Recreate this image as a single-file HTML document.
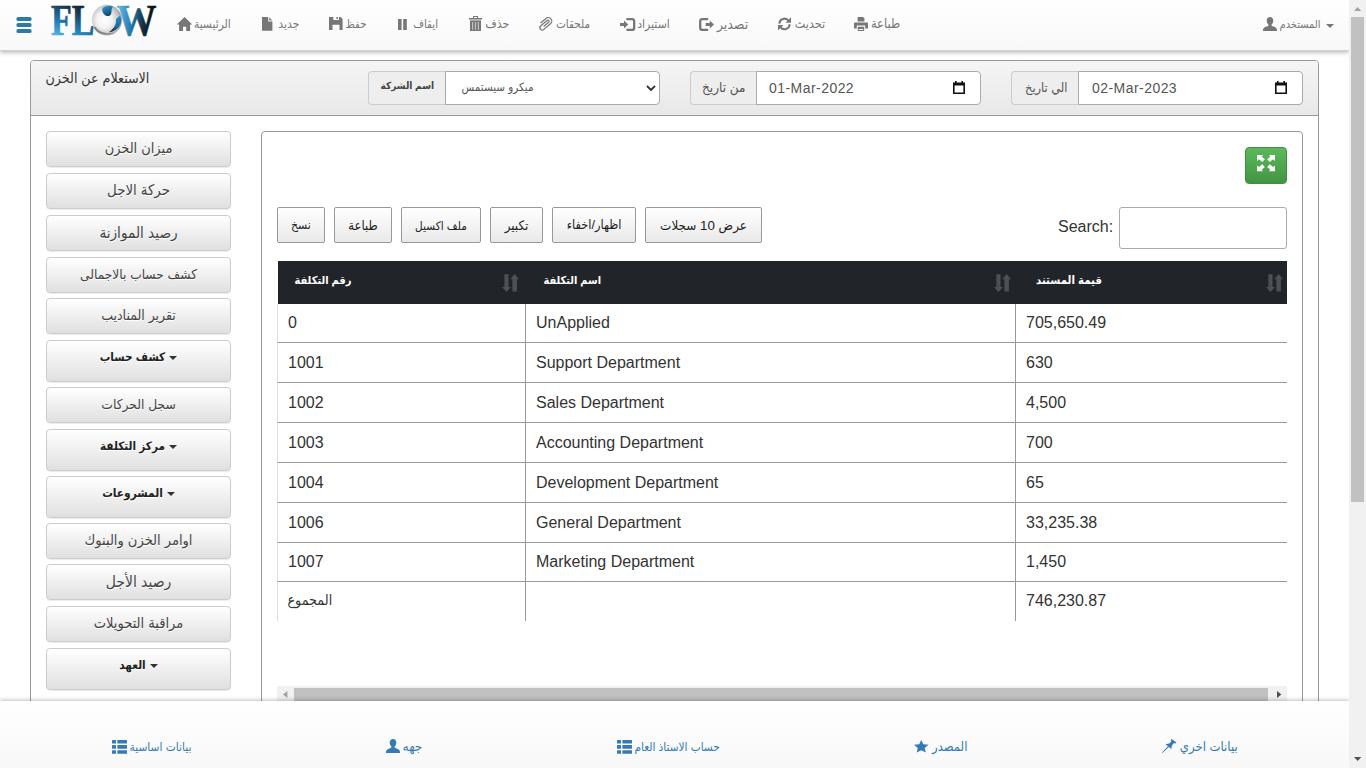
<!DOCTYPE html>
<html lang="ar">
<head>
<meta charset="utf-8">
<title>FLOW</title>
<style>
*{box-sizing:border-box}
html,body{margin:0;padding:0;width:1366px;height:768px;overflow:hidden;background:#fff}
body{font-family:"Liberation Sans","DejaVu Sans Condensed","DejaVu Sans",sans-serif;font-size:14px;color:#333;position:relative}
svg{display:block;overflow:visible}
.abs{position:absolute}
.t{position:absolute;white-space:nowrap;direction:rtl}
#nav{position:absolute;left:0;top:0;width:1349px;height:51px;background:linear-gradient(#fff,#f8f8f8);border-bottom:1px solid #d2d2d2;box-shadow:0 1px 5px rgba(0,0,0,.35);z-index:5}
#nav .t{color:#777;font-size:11px;line-height:16px;top:16px}
#vscroll{position:absolute;left:1349px;top:0;width:17px;height:768px;background:#f1f1f1;z-index:10}
#vscroll .thumb{position:absolute;left:2px;top:17px;width:13px;height:485px;background:#c1c1c1}
#panel{position:absolute;left:30px;top:60px;width:1289px;height:720px;border:1px solid #999;border-radius:4px;background:#fff}
#phead{position:absolute;left:0;top:0;width:1287px;height:55px;background:linear-gradient(#f5f5f5,#e8e8e8);border-bottom:1px solid #999;border-radius:3px 3px 0 0}
.addon{position:absolute;top:71px;height:34px;background:#eee;border:1px solid #ccc;border-right:0;border-radius:4px 0 0 4px}
.ctl{position:absolute;top:71px;height:34px;background:#fff;border:1px solid #aaa;border-radius:0 4px 4px 0}
.sbtn{position:absolute;left:46px;width:185px;border:1px solid #ccc;border-radius:4px;background:linear-gradient(#fff,#e0e0e0);box-shadow:0 1px 1px rgba(0,0,0,.075);text-align:center;font-size:13px;color:#444;text-shadow:0 1px 0 #fff;white-space:nowrap}
.sbtn.n{height:36px;line-height:33px}
.sbtn.d{height:42px;line-height:32px;font-weight:bold;color:#222;font-size:12px;font-family:"Liberation Sans","DejaVu Sans Condensed","DejaVu Sans",sans-serif}
.caret{display:inline-block;width:0;height:0;border-left:4px solid transparent;border-right:4px solid transparent;border-top:4px solid #333;vertical-align:middle;margin:0 0 0 4px;float:none}
#inner{position:absolute;left:261px;top:131px;width:1042px;height:640px;border:1px solid #999;border-radius:4px;background:#fff}
#gbtn{position:absolute;left:1245px;top:147px;width:42px;height:37px;border:1px solid #3e8f3e;border-radius:4px;background:linear-gradient(#5cb85c,#419641)}
.dtb{position:absolute;top:207px;height:36px;border:1px solid #999;border-radius:2px;background:linear-gradient(#fff,#e9e9e9);font-size:11px;color:#222;text-align:center;line-height:35px;white-space:nowrap;direction:rtl}
#search{position:absolute;left:1119px;top:207px;width:168px;height:42px;border:1px solid #aaa;border-radius:3px;background:#fff}
#searchl{position:absolute;left:1058px;top:217px;font-size:16px;color:#333;line-height:20px}
#thead{position:absolute;left:278px;top:261px;width:1009px;height:43px;background:#212529}
#thead .t{font-family:"Liberation Sans","DejaVu Sans Condensed","DejaVu Sans",sans-serif;color:#fff;font-weight:bold;font-size:12px;line-height:20px;top:9px}
.row{position:absolute;left:277px;width:1010px;border-bottom:1px solid #999;border-left:1px solid #ddd;font-size:16px;color:#333}
.row .c{position:absolute;top:0;bottom:0;display:flex;align-items:center;white-space:nowrap}
.vline{position:absolute;width:1px;background:#999;top:304px;height:317px}
#hscroll{position:absolute;left:277px;top:686px;width:1010px;height:17px;background:#f1f1f1}
#hscroll .thumb{position:absolute;left:17px;top:2px;width:974px;height:13px;background:#c1c1c1}
#footer{position:absolute;left:0;top:701px;width:1349px;height:67px;background:linear-gradient(#fff,#f8f8f8);box-shadow:0 -1px 4px rgba(0,0,0,.25);z-index:6}
#footer .t{color:#337ab7;font-size:11px;line-height:16px;top:37.5px}
</style>
</head>
<body>

<div id="nav">
<svg class="abs" style="left:16px;top:17px" width="16" height="16" viewBox="0 0 16 16"><g fill="#2b7ba7"><rect x="0.5" y="0" width="15" height="4" rx="1.5"/><rect x="0.5" y="6" width="15" height="4" rx="1.5"/><rect x="0.5" y="12" width="15" height="4" rx="1.5"/></g></svg>
<svg class="abs" style="left:50px;top:0px" width="110" height="40" viewBox="0 0 110 40">
<defs>
<linearGradient id="lg1" x1="0.7" y1="0" x2="0.3" y2="1"><stop offset="0" stop-color="#0e131b"/><stop offset="0.3" stop-color="#15354d"/><stop offset="0.65" stop-color="#2580b6"/><stop offset="1" stop-color="#6ec6f2"/></linearGradient>
<linearGradient id="lg2" x1="0" y1="0" x2="1" y2="0.12"><stop offset="0" stop-color="#74c4ec"/><stop offset="0.4" stop-color="#2a80b2"/><stop offset="0.72" stop-color="#17303f"/><stop offset="1" stop-color="#070708"/></linearGradient>
<radialGradient id="rg1" cx="0.42" cy="0.5" r="0.62"><stop offset="0" stop-color="#ffffff"/><stop offset="0.42" stop-color="#f2f2f2"/><stop offset="0.72" stop-color="#cbcbcb"/><stop offset="1" stop-color="#909090"/></radialGradient>
<linearGradient id="lg3" x1="0.2" y1="0" x2="0.6" y2="1"><stop offset="0" stop-color="#2f93cc"/><stop offset="1" stop-color="#0f4468"/></linearGradient>
<linearGradient id="lg4" x1="0.5" y1="0" x2="0.3" y2="1"><stop offset="0" stop-color="#2b8ac2"/><stop offset="0.6" stop-color="#1b6a9c"/><stop offset="1" stop-color="#0b1e30"/></linearGradient>
</defs>
<text x="1" y="34.8" font-family="Liberation Serif, serif" font-weight="bold" font-size="44" fill="url(#lg1)" stroke="url(#lg1)" stroke-width="0.7" textLength="43.5" lengthAdjust="spacingAndGlyphs">FL</text>
<ellipse cx="56.9" cy="20.2" rx="15" ry="15.4" fill="url(#rg1)"/>
<path d="M43.2 26.5 C46 33.5 55 37.5 65 32.5 C58 34.5 49 32.5 45.8 27 Z" fill="#858585"/>
<path d="M52.3 10.5 C51.5 6.8 57 5.2 63.2 6.6 C60.6 8.4 62.3 12 60.8 14.6 C58.6 17.8 53 15.6 52.3 10.5 Z" fill="url(#lg3)"/>
<path d="M70.2 15.5 C73.5 22 70 30 58.5 32.6 C63.5 28.8 66.6 25 66 19.2 C67.4 17.6 69 16.4 70.2 15.5 Z" fill="url(#lg4)"/>
<text x="66.5" y="34.8" font-family="Liberation Serif, serif" font-weight="bold" font-size="44" fill="url(#lg2)" stroke="url(#lg2)" stroke-width="0.5" textLength="40" lengthAdjust="spacingAndGlyphs">W</text>
</svg>
<svg class="abs" style="left:177px;top:17px" width="15" height="14" viewBox="0 0 15 14" fill="#777" stroke="#777" stroke-width="0"><path d="M7.6 0 L15 7.3 V7.6 H0 V7.3 Z M2.1 7.6 H13.1 V14 H9.2 V9.8 H6 V14 H2.1 Z"/></svg>
<span class="t" style="left:193.9px;font-size:11.91px">الرئيسية</span>
<svg class="abs" style="left:261.8px;top:17px" width="10.4" height="13.8" viewBox="0 0 10.4 13.8" fill="#777" stroke="#777" stroke-width="0"><path d="M0 0 H6.2 V4.4 H10.4 V13.8 H0 Z M7.2 0.2 L10.2 3.4 H7.2 Z"/></svg>
<span class="t" style="left:278.2px;font-size:12.11px">جديد</span>
<svg class="abs" style="left:328.5px;top:17px" width="13.6" height="13" viewBox="0 0 13.6 13" fill="#777" stroke="#777" stroke-width="0"><path fill-rule="evenodd" d="M0 0 H11.6 L13.6 2 V13 H0 Z M4.3 0 V2.9 H10 V0 Z M3.5 7.7 V13 H10.5 V7.7 Z"/><rect x="7.4" y="0" width="1.5" height="2"/></svg>
<span class="t" style="left:345.5px;font-size:11.26px">حفظ</span>
<svg class="abs" style="left:398px;top:19px" width="9" height="11" viewBox="0 0 9 11" fill="#777" stroke="#777" stroke-width="0"><rect x="0" y="0" width="3.6" height="11"/><rect x="5.2" y="0" width="3.6" height="11"/></svg>
<span class="t" style="left:413.2px;font-size:11.56px">ايقاف</span>
<svg class="abs" style="left:469px;top:16px" width="13" height="15" viewBox="0 0 13 15" fill="#777" stroke="#777" stroke-width="0"><path fill-rule="evenodd" d="M4 0 H9 V2 H13 V3.4 H0 V2 H4 Z M5 0.9 V2 H8 V0.9 Z M1 4.6 H12 V15 H1 Z M3 6 V13.7 H4.2 V6 Z M5.9 6 V13.7 H7.1 V6 Z M8.8 6 V13.7 H10 V6 Z" /><rect x="1" y="4.6" width="11" height="10.4" fill-opacity=".45"/></svg>
<span class="t" style="left:485.3px;font-size:12.34px">حذف</span>
<svg class="abs" style="left:538.5px;top:17px" width="15" height="14" viewBox="0 0 15 14" fill="#777" stroke="#777" stroke-width="0"><g transform="translate(-0.3 -0.6) rotate(230 7.5 7)" fill="none" stroke-width="1.25"><path d="M6.7 3 V9.6 a1.25 1.25 0 0 0 2.5 0 V1.4 a2.4 2.4 0 0 0 -4.8 0 V10 a3.55 3.55 0 0 0 7.1 0 V3"/></g></svg>
<span class="t" style="left:556.0px;font-size:11.58px">ملحقات</span>
<svg class="abs" style="left:619.8px;top:18px" width="15.4" height="13" viewBox="0 0 15.4 13" fill="#777" stroke="#777" stroke-width="0"><path d="M0 5 H4 V2.4 L8.2 6.5 L4 10.6 V8 H0 Z"/><path d="M7.3 1.15 H12 a2.2 2.2 0 0 1 2.2 2.2 V9.65 a2.2 2.2 0 0 1 -2.2 2.2 H7.3" fill="none" stroke-width="2.3" stroke-linecap="round"/></svg>
<span class="t" style="left:637.2px;font-size:12.1px">استيراد</span>
<svg class="abs" style="left:699.2px;top:18px" width="15" height="13" viewBox="0 0 15 13" fill="#777" stroke="#777" stroke-width="0"><path d="M6.6 5 H10.8 V2.4 L15 6.5 L10.8 10.6 V8 H6.6 Z"/><path d="M8.3 1.15 H3.4 a2.2 2.2 0 0 0 -2.2 2.2 V9.65 a2.2 2.2 0 0 0 2.2 2.2 H8.3" fill="none" stroke-width="2.3" stroke-linecap="round"/></svg>
<span class="t" style="left:716.9px;font-size:13.91px">تصدير</span>
<svg class="abs" style="left:777.8px;top:17px" width="13" height="13.8" viewBox="0 0 13 13.8" fill="#777" stroke="#777" stroke-width="0"><path d="M1.35 6.6 A5.15 5.15 0 0 1 10.6 3.7" fill="none" stroke-width="2.1"/><path d="M11.65 7.2 A5.15 5.15 0 0 1 2.4 10.1" fill="none" stroke-width="2.1"/><path d="M13 0.2 V5.7 H7.6 Z"/><path d="M0 13.6 V8.1 H5.4 Z"/></svg>
<span class="t" style="left:794.8px;font-size:12.47px">تحديث</span>
<svg class="abs" style="left:854px;top:17px" width="14" height="14" viewBox="0 0 14 14" fill="#777" stroke="#777" stroke-width="0"><path d="M3.6 0 H9 L10.4 1.4 V4.6 H3.6 Z"/><path fill-rule="evenodd" d="M1 5.4 H13 a1 1 0 0 1 1 1 V11.4 H11.2 V8.6 H2.8 V11.4 H0 V6.4 a1 1 0 0 1 1 -1 Z"/><path d="M3.8 9.8 H10.2 V14 H3.8 Z M4.8 12 H9.2 V13 H4.8 Z" fill-rule="evenodd"/></svg>
<span class="t" style="left:870.9px;font-size:12.89px">طباعة</span>
<svg class="abs" style="left:1263px;top:17px" width="14" height="14" viewBox="0 0 14 14" fill="#777" stroke="#777" stroke-width="0"><path d="M7 0 C9 0 10.3 1.5 10.3 3.6 C10.3 5.4 9.5 6.8 8.6 7.6 C8.4 8.6 9 9 10.4 9.6 C12.4 10.4 14 11 14 13 V14 H0 V13 C0 11 1.6 10.4 3.6 9.6 C5 9 5.6 8.6 5.4 7.6 C4.5 6.8 3.7 5.4 3.7 3.6 C3.7 1.5 5 0 7 0 Z"/></svg>
<span class="t" style="left:1279.5px;font-size:11.0px">المستخدم</span>
<span class="abs" style="left:1326px;top:24px;width:0;height:0;border-left:4px solid transparent;border-right:4px solid transparent;border-top:4px solid #777"></span>
</div>
<div id="panel"><div id="phead"></div></div>
<div class="t" style="left:45.5px;top:69px;font-size:14.14px;color:#333;line-height:18px">الاستعلام عن الخزن</div>
<div class="addon" style="left:368px;width:78px"></div><div class="ctl" style="left:445px;width:215px"></div>
<div class="t" style="left:380.5px;top:77px;font-size:9.99px;font-weight:bold;font-family:'Liberation Sans','DejaVu Sans Condensed','DejaVu Sans',sans-serif;color:#444;line-height:18px">اسم الشركة</div>
<div class="t" style="left:461.5px;top:78px;font-size:11.57px;color:#555;line-height:18px">ميكرو سيستمس</div>
<svg class="abs" style="left:645.5px;top:85px" width="10" height="7" viewBox="0 0 10 7"><path d="M1 1 L5 5 L9 1" fill="none" stroke="#333" stroke-width="1.8"/></svg>
<div class="addon" style="left:690px;width:67px"></div><div class="ctl" style="left:756px;width:225px"></div>
<div class="t" style="left:702px;top:79px;font-size:13.45px;color:#555;line-height:18px">من تاريخ</div>
<div class="abs" style="left:769px;top:79px;font-size:14px;color:#555;line-height:18px;letter-spacing:.45px">01-Mar-2022</div>
<svg class="abs" style="left:953px;top:81px" width="12" height="13" viewBox="0 0 12 13" fill="#111"><path fill-rule="evenodd" d="M0 1.5 H2 V0 H3.6 V1.5 H8.4 V0 H10 V1.5 H12 V13 H0 Z M1.6 4.6 V11.4 H10.4 V4.6 Z"/></svg>
<div class="addon" style="left:1011px;width:68px"></div><div class="ctl" style="left:1078px;width:225px"></div>
<div class="t" style="left:1025px;top:79px;font-size:12.72px;color:#555;line-height:18px">الي تاريخ</div>
<div class="abs" style="left:1092px;top:79px;font-size:14px;color:#555;line-height:18px;letter-spacing:.45px">02-Mar-2023</div>
<svg class="abs" style="left:1275px;top:81px" width="12" height="13" viewBox="0 0 12 13" fill="#111"><path fill-rule="evenodd" d="M0 1.5 H2 V0 H3.6 V1.5 H8.4 V0 H10 V1.5 H12 V13 H0 Z M1.6 4.6 V11.4 H10.4 V4.6 Z"/></svg>
<div class="sbtn n" style="top:131px;font-size:14.42px">ميزان الخزن</div>
<div class="sbtn n" style="top:173px;font-size:14.85px">حركة الاجل</div>
<div class="sbtn n" style="top:215px;font-size:15.21px">رصيد الموازنة</div>
<div class="sbtn n" style="top:257px;font-size:13.59px">كشف حساب بالاجمالى</div>
<div class="sbtn n" style="top:298px;font-size:13.98px">تقرير المناديب</div>
<div class="sbtn d" style="top:340px;font-size:11.71px">كشف حساب<span class="caret"></span></div>
<div class="sbtn n" style="top:387px;font-size:13.67px">سجل الحركات</div>
<div class="sbtn d" style="top:429px;font-size:11.66px">مركز التكلفة<span class="caret"></span></div>
<div class="sbtn d" style="top:476px;font-size:11.79px">المشروعات<span class="caret"></span></div>
<div class="sbtn n" style="top:523px;font-size:14.52px">اوامر الخزن والبنوك</div>
<div class="sbtn n" style="top:564px;font-size:15.54px">رصيد الأجل</div>
<div class="sbtn n" style="top:606px;font-size:14.5px">مراقبة التحويلات</div>
<div class="sbtn d" style="top:648px;font-size:11.6px">العهد<span class="caret"></span></div>
<div id="inner"></div>
<div id="gbtn"><svg class="abs" style="left:11px;top:6.7px" width="18" height="16.3" viewBox="0 0 18 16.3" fill="#fff" stroke="#fff" stroke-width="0"><path d="M 0 0 H 6.2 L 4.6 1.5 L 7.9 4.2 L 5.3 7.1 L 1.9 4.2 L 0 5.9 Z"/><path d="M 18 0 H 11.8 L 13.4 1.5 L 10.1 4.2 L 12.7 7.1 L 16.1 4.2 L 18 5.9 Z"/><path d="M 0 16.3 H 6.2 L 4.6 14.8 L 7.9 12.1 L 5.3 9.2 L 1.9 12.1 L 0 10.4 Z"/><path d="M 18 16.3 H 11.8 L 13.4 14.8 L 10.1 12.1 L 12.7 9.2 L 16.1 12.1 L 18 10.4 Z"/></svg></div>
<div class="dtb" style="left:277px;width:48px;font-size:12.12px">نسخ</div>
<div class="dtb" style="left:334px;width:58px;font-size:12.85px">طباعة</div>
<div class="dtb" style="left:401px;width:80px;font-size:11.71px">ملف اكسيل</div>
<div class="dtb" style="left:490px;width:53px;font-size:13.15px">تكبير</div>
<div class="dtb" style="left:552px;width:84px;font-size:12.67px">اظهار/اخفاء</div>
<div class="dtb" style="left:645px;width:117px;font-size:13.35px">عرض 10 سجلات</div>
<div id="searchl">Search:</div><div id="search"></div>
<div id="thead">
<span class="t" style="left:16.5px;font-size:10.99px">رقم التكلفة</span>
<span class="t" style="left:265.5px;font-size:10.91px">اسم التكلفة</span>
<span class="t" style="left:758.0px;font-size:11.38px">قيمة المستند</span>
<svg class="abs" style="left:223.7px;top:13px" width="17" height="18" viewBox="0 0 17 18" fill="#4d5155" stroke="#4d5155" stroke-width="0"><path d="M2.4 0.3 H6.5 V12.9 H9 L4.5 17.9 L0 12.9 H2.4 Z"/><path d="M12.6 0 L17 5.3 H14.9 V17.6 H10.4 V5.3 H8.2 Z"/></svg>
<svg class="abs" style="left:715.5px;top:13px" width="17" height="18" viewBox="0 0 17 18" fill="#4d5155" stroke="#4d5155" stroke-width="0"><path d="M2.4 0.3 H6.5 V12.9 H9 L4.5 17.9 L0 12.9 H2.4 Z"/><path d="M12.6 0 L17 5.3 H14.9 V17.6 H10.4 V5.3 H8.2 Z"/></svg>
<svg class="abs" style="left:987.5px;top:13px" width="17" height="18" viewBox="0 0 17 18" fill="#4d5155" stroke="#4d5155" stroke-width="0"><path d="M2.4 0.3 H6.5 V12.9 H9 L4.5 17.9 L0 12.9 H2.4 Z"/><path d="M12.6 0 L17 5.3 H14.9 V17.6 H10.4 V5.3 H8.2 Z"/></svg>
</div>
<div class="row" style="top:304px;height:39px"><span class="c" style="left:10px">0</span><span class="c" style="left:258px">UnApplied</span><span class="c" style="left:748px">705,650.49</span></div>
<div class="row" style="top:343px;height:40px"><span class="c" style="left:10px">1001</span><span class="c" style="left:258px">Support Department</span><span class="c" style="left:748px">630</span></div>
<div class="row" style="top:383px;height:40px"><span class="c" style="left:10px">1002</span><span class="c" style="left:258px">Sales Department</span><span class="c" style="left:748px">4,500</span></div>
<div class="row" style="top:423px;height:40px"><span class="c" style="left:10px">1003</span><span class="c" style="left:258px">Accounting Department</span><span class="c" style="left:748px">700</span></div>
<div class="row" style="top:463px;height:40px"><span class="c" style="left:10px">1004</span><span class="c" style="left:258px">Development Department</span><span class="c" style="left:748px">65</span></div>
<div class="row" style="top:503px;height:40px"><span class="c" style="left:10px">1006</span><span class="c" style="left:258px">General Department</span><span class="c" style="left:748px">33,235.38</span></div>
<div class="row" style="top:543px;height:39px"><span class="c" style="left:10px">1007</span><span class="c" style="left:258px">Marketing Department</span><span class="c" style="left:748px">1,450</span></div>
<div class="row" style="top:582px;height:39px;border-bottom:0"><span class="c" style="left:9.5px;bottom:3px;font-size:14.21px;direction:rtl">المجموع</span><span class="c" style="left:748px;bottom:2px">746,230.87</span></div>
<div class="vline" style="left:525px"></div><div class="vline" style="left:1015px"></div>
<div id="hscroll"><div class="thumb"></div><svg class="abs" style="left:5.8px;top:4.8px" width="4.4" height="7.2" viewBox="0 0 5 8"><path d="M5 0 V8 L0 4 Z" fill="#a3a3a3"/></svg><svg class="abs" style="left:999.5px;top:4.8px" width="4.4" height="7.2" viewBox="0 0 5 8"><path d="M0 0 V8 L5 4 Z" fill="#505050"/></svg></div>
<div id="footer">
<svg class="abs" style="left:112px;top:39px" width="15" height="14" viewBox="0 0 15 14" fill="#337ab7" stroke="#337ab7" stroke-width="0"><rect x="0" y="0" width="4" height="3.6" rx=".5"/><rect x="5.4" y="0" width="9.6" height="3.6" rx=".5"/><rect x="0" y="5.1" width="4" height="3.6" rx=".5"/><rect x="5.4" y="5.1" width="9.6" height="3.6" rx=".5"/><rect x="0" y="10.2" width="4" height="3.6" rx=".5"/><rect x="5.4" y="10.2" width="9.6" height="3.6" rx=".5"/></svg>
<span class="t" style="left:129.5px;font-size:11.85px">بيانات اساسية</span>
<svg class="abs" style="left:385.5px;top:38px" width="14" height="14" viewBox="0 0 14 14" fill="#337ab7" stroke="#337ab7" stroke-width="0"><path d="M7 0 C9 0 10.3 1.5 10.3 3.6 C10.3 5.4 9.5 6.8 8.6 7.6 C8.4 8.6 9 9 10.4 9.6 C12.4 10.4 14 11 14 13 V14 H0 V13 C0 11 1.6 10.4 3.6 9.6 C5 9 5.6 8.6 5.4 7.6 C4.5 6.8 3.7 5.4 3.7 3.6 C3.7 1.5 5 0 7 0 Z"/></svg>
<span class="t" style="left:402.5px;font-size:13.76px">جهه</span>
<svg class="abs" style="left:617px;top:39px" width="15" height="14" viewBox="0 0 15 14" fill="#337ab7" stroke="#337ab7" stroke-width="0"><rect x="0" y="0" width="4" height="3.6" rx=".5"/><rect x="5.4" y="0" width="9.6" height="3.6" rx=".5"/><rect x="0" y="5.1" width="4" height="3.6" rx=".5"/><rect x="5.4" y="5.1" width="9.6" height="3.6" rx=".5"/><rect x="0" y="10.2" width="4" height="3.6" rx=".5"/><rect x="5.4" y="10.2" width="9.6" height="3.6" rx=".5"/></svg>
<span class="t" style="left:634.4px;font-size:11.73px">حساب الاستاذ العام</span>
<svg class="abs" style="left:913.5px;top:38.7px" width="14.5" height="12.6" viewBox="0 0 14.5 12.6" fill="#337ab7" stroke="#337ab7" stroke-width="0"><path d="M7.25 0 L9.3 4.3 L14.5 4.8 L10.7 8 L11.8 12.6 L7.25 10.2 L2.7 12.6 L3.8 8 L0 4.8 L5.2 4.3 Z"/></svg>
<span class="t" style="left:932.0px;font-size:12.96px">المصدر</span>
<svg class="abs" style="left:1161.7px;top:38px" width="14.5" height="14" viewBox="0 0 14.5 14" fill="#337ab7" stroke="#337ab7" stroke-width="0"><path d="M9.6 0 L14.5 3.4 L13.4 4.4 L12 4 L9.9 6.6 L9.4 10 L6.9 8 L0.5 14 L0 13.5 L6 7.2 L3.5 5.2 L7.3 4.5 L9.4 2.2 L8.7 0.9 Z"/></svg>
<span class="t" style="left:1179.8px;font-size:13.0px">بيانات اخري</span>
</div>
<div id="vscroll"><div class="thumb"></div><svg class="abs" style="left:4.9px;top:6.8px" width="7.3" height="4.1" viewBox="0 0 9 5"><path d="M0 5 H9 L4.5 0 Z" fill="#a3a3a3"/></svg><svg class="abs" style="left:4.9px;top:756.8px" width="7.3" height="4.2" viewBox="0 0 9 5"><path d="M0 0 H9 L4.5 5 Z" fill="#505050"/></svg></div>
</body></html>
